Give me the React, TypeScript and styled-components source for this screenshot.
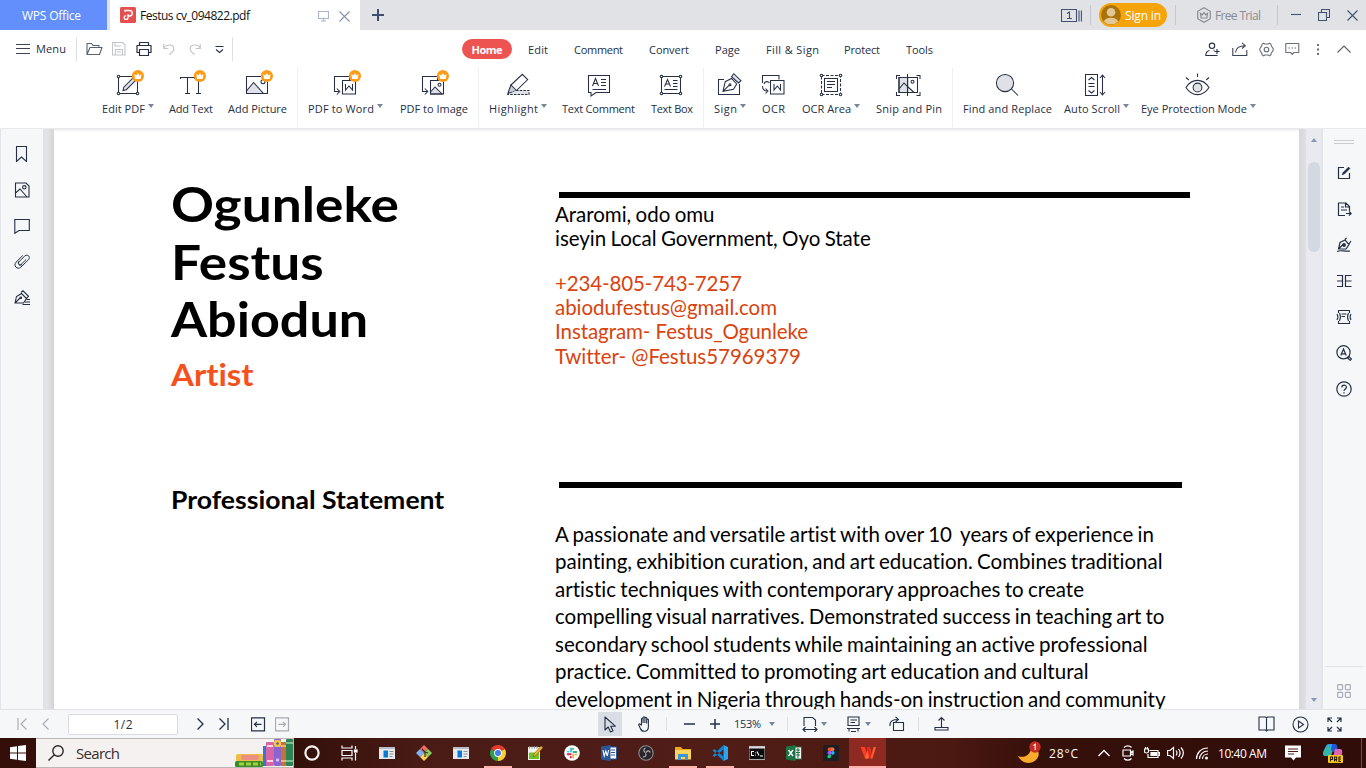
import React, { useLayoutEffect, useRef, useState } from "react";
import styled, { createGlobalStyle, css } from "styled-components";

const ink = "#262f45";
const shade = "#dfe1e6";

const Global = createGlobalStyle`
  * { box-sizing: border-box; }
  body { margin: 0; overflow: hidden; background: #fff; }
  svg { display: block; flex: none; }
`;

/* ---------- shared pieces ---------- */

const FitSpan = styled.span`
  display: inline-block;
  white-space: pre;
  flex: none;
  transform-origin: left center;
  font-variant-ligatures: none;
`;

/** Text set to a fixed measure by spreading the difference between its letters. */
function Fit({ w, children }: { w: number; children: string }) {
  const ref = useRef<HTMLSpanElement>(null);
  const [spacing, setSpacing] = useState(0);
  useLayoutEffect(() => {
    const el = ref.current;
    if (el) setSpacing((w - el.getBoundingClientRect().width) / (children.length - 1));
  }, []);
  return (
    <FitSpan ref={ref} style={{ letterSpacing: spacing, marginRight: -spacing }}>
      {children}
    </FitSpan>
  );
}

/** Text set to a fixed measure by widening the letters themselves. */
function Wide({ w, children }: { w: number; children: string }) {
  const ref = useRef<HTMLSpanElement>(null);
  const [scale, setScale] = useState(1);
  useLayoutEffect(() => {
    const el = ref.current;
    if (el) setScale(w / el.offsetWidth);
  }, []);
  return (
    <FitSpan ref={ref} style={{ transform: `scaleX(${scale})` }}>
      {children}
    </FitSpan>
  );
}

type IconProps = { w?: number; h?: number; c?: string; sw?: number; children: React.ReactNode };
const Icon = ({ w = 16, h = 16, c = ink, sw = 1.1, children }: IconProps) => (
  <svg width={w} height={h} viewBox={`0 0 ${w} ${h}`} fill="none" stroke={c} strokeWidth={sw}>
    {children}
  </svg>
);

const Slot = styled.div<{ $ml?: number; $dy?: number }>`
  flex: none;
  display: flex;
  align-items: center;
  margin-left: ${(p) => p.$ml ?? 0}px;
  margin-top: ${(p) => p.$dy ?? 0}px;
`;

const Divider = styled.div<{ $ml?: number; $h?: number; $c?: string }>`
  flex: none;
  width: 1px;
  height: ${(p) => p.$h ?? 20}px;
  margin-left: ${(p) => p.$ml ?? 0}px;
  background: ${(p) => p.$c ?? "#dcdfe5"};
`;

const Spacer = styled.div`
  flex: 1;
`;

const Caret = styled.i<{ $ml?: number }>`
  flex: none;
  border: 3px solid transparent;
  border-top: 4px solid #7b8598;
  border-bottom: 0;
  margin-left: ${(p) => p.$ml ?? 0}px;
`;

const Screen = styled.div`
  width: 1366px;
  height: 768px;
  display: flex;
  flex-direction: column;
  font-family: "Open Sans", "Noto Sans", sans-serif;
  font-size: 11px;
  color: ${ink};
  overflow: hidden;
`;

/* ---------- title bar ---------- */

const TitleBar = styled.header`
  flex: none;
  height: 30px;
  display: flex;
  align-items: center;
  background: #e1e2e6;
`;
const HomeTab = styled.div`
  width: 107px;
  height: 30px;
  display: flex;
  align-items: center;
  padding-left: 22px;
  background: #638ffc;
  color: #fff;
  font-size: 12px;
`;
const FileTab = styled.div`
  width: 250px;
  height: 30px;
  margin-left: 3px;
  padding-left: 10px;
  display: flex;
  align-items: center;
  background: #fff;
  color: #111;
  font-size: 12px;
`;
const SignIn = styled.div`
  width: 68px;
  height: 24px;
  margin-left: 8px;
  padding-left: 2px;
  display: flex;
  align-items: center;
  gap: 4px;
  border-radius: 12px;
  background: #f5a50b;
  color: #fff;
  font-size: 12px;
`;
const Trial = styled.div`
  margin-left: 3px;
  color: #8a8c92;
  font-size: 12px;
`;

const TitleRow = () => (
  <TitleBar>
    <HomeTab><Fit w={59}>WPS Office</Fit></HomeTab>
    <FileTab>
      <Icon w={16} h={16} c="#fff" sw={1.3}>
        <rect width="16" height="16" rx="1.5" fill="#e5504f" stroke="none" />
        <path d="M5 5V3.500h4.500a2.700 2.700 0 0 1 0 5.500H8v1.500a1.900 1.900 0 1 1-1.900-1.900M8 9V7" />
      </Icon>
      <Slot $ml={4}><Fit w={110}>Festus cv_094822.pdf</Fit></Slot>
      <Slot $ml={68} $dy={2}>
        <Icon w={12} h={12} c="#a9b4cb"><path d="M.5 1.500h10v7h-10zM5.500 8.500v2.500M3 11h5" /></Icon>
      </Slot>
      <Slot $ml={9} $dy={2}>
        <Icon w={11} h={11} c="#8793ad" sw={1.1}><path d="M.5.5l10 10M10.500.5l-10 10" /></Icon>
      </Slot>
    </FileTab>
    <Slot $ml={12}>
      <Icon w={12} h={12} c="#3f4d70" sw={2}><path d="M6 0v12M0 6h12" /></Icon>
    </Slot>
    <Spacer />
    <Icon w={21} h={15} c="#42506f">
      <path d="M.5 1.500h15v12h-15zM18 2.500v11M20.400 2.500v11M6 5.500l2.500-1.500v7M6 10.500h5" />
    </Icon>
    <Divider $ml={8} $c="#c6c8ce" />
    <SignIn>
      <Icon w={20} h={20} c="none">
        <circle cx="10" cy="10" r="10" fill="#a87308" />
        <circle cx="10" cy="7.300" r="4.300" fill="#e2c795" />
        <path d="M2.800 16.500a7.400 5 0 0 1 14.400 0a10 10 0 0 1-14.400 0z" fill="#e2c795" />
      </Icon>
      <Fit w={36}>Sign in</Fit>
    </SignIn>
    <Divider $ml={8} $c="#c6c8ce" />
    <Slot $ml={20}>
      <Icon w={16} h={16} c="#8a8c92" sw={1.2}>
        <path d="M8 .8l6.300 3.500v7.400L8 15.200l-6.300-3.500V4.300z" />
        <path d="M4.500 6.500l1.700 1.300L8 5.500l1.800 2.300 1.700-1.300-.7 4.500H5.200z" />
      </Icon>
      <Trial><Fit w={46}>Free Trial</Fit></Trial>
    </Slot>
    <Divider $ml={16} $c="#c6c8ce" />
    <Slot $ml={13}><Icon w={10} h={12} c="#42506f"><path d="M0 5.500h10" /></Icon></Slot>
    <Slot $ml={17}>
      <Icon w={12} h={12} c="#42506f"><path d="M.5 3.500h8v8h-8zM3.500 3.500v-3h8v8h-3" /></Icon>
    </Slot>
    <Slot $ml={17}>
      <Icon w={11} h={11} c="#42506f"><path d="M.5.5l10 10M10.500.5l-10 10" /></Icon>
    </Slot>
    <Slot $ml={8} />
  </TitleBar>
);

/* ---------- menu row ---------- */

const MenuBar = styled.nav`
  flex: none;
  height: 38px;
  display: flex;
  align-items: center;
`;
const TabStrip = styled.div`
  display: flex;
  align-items: center;
  margin-left: 229px;
`;
const Tab = styled.div<{ $ml: number; $active?: boolean }>`
  height: 20px;
  display: flex;
  align-items: center;
  margin-left: ${(p) => p.$ml}px;
  ${(p) =>
    p.$active &&
    css`
      width: 50px;
      justify-content: center;
      border-radius: 10px;
      background: #ed5451;
      color: #fff;
      font-weight: 700;
    `}
`;
const tabs: [string, number, number][] = [
  ["Edit", 16, 20],
  ["Comment", 26, 49],
  ["Convert", 26, 40],
  ["Page", 26, 25],
  ["Fill & Sign", 26, 53],
  ["Protect", 25, 36],
  ["Tools", 26, 27],
];

const MenuRow = () => (
  <MenuBar>
    <Slot $ml={16}><Icon w={14} h={12} c="#3c4354"><path d="M0 1.500h14M0 5.500h14M0 10.500h14" /></Icon></Slot>
    <Slot $ml={6} $dy={-1}><Fit w={30}>Menu</Fit></Slot>
    <Divider $ml={10} $h={24} />
    <Slot $ml={9}>
      <Icon w={17} h={14} c="#5b6172">
        <path d="M1 12.500V1.500h4.500l1.500 2h6v2M1 12.500l3-7h12l-2.500 7z" strokeLinejoin="round" />
      </Icon>
    </Slot>
    <Slot $ml={9}>
      <Icon w={14} h={14} c="#c3c5c9"><path d="M.5.5h10l2.500 2.500v10H.5zM3 .5v3.500h6M3.500 13V7.500h7V13M5 10h4" /></Icon>
    </Slot>
    <Slot $ml={10}>
      <Icon w={16} h={16} sw={1.2}>
        <path d="M3.500 4.500V1.500h9v3M3.500 11.500h-2.500v-7h14v7h-2.500M3.500 8.500h9v6h-9z" strokeLinejoin="round" />
      </Icon>
    </Slot>
    <Slot $ml={11}>
      <Icon w={12} h={12} c="#c3c5c9" sw={1.2}><path d="M.8 1v4.500h4.500M.8 5.200C3 1 10.500.8 10.800 5.500c.2 3-2 4.200-4.500 6" /></Icon>
    </Slot>
    <Slot $ml={14}>
      <Icon w={12} h={12} c="#c3c5c9" sw={1.2}><path d="M11.200 1v4.500H6.700M11.200 5.200C9 1 1.500.8 1.200 5.500c-.2 3 2 4.200 4.500 6" /></Icon>
    </Slot>
    <Slot $ml={14} $dy={1}>
      <Icon w={9} h={9}><path d="M.5 1.500h8M1 4.500l3.500 3 3.500-3" /></Icon>
    </Slot>
    <Divider $ml={8} $h={24} />
    <TabStrip>
      <Tab $ml={0} $active><Fit w={31}>Home</Fit></Tab>
      {tabs.map(([t, ml, w]) => (
        <Tab key={t} $ml={ml}><Fit w={w}>{t}</Fit></Tab>
      ))}
    </TabStrip>
    <Spacer />
    <Icon w={15} h={15}>
      <circle cx="7" cy="3.800" r="2.700" />
      <path d="M8.500 13.500H.8c0-3 1.200-4.500 3.700-5M8.500 13.500h4M8.500 8c1 .3 1 .5 1 .5M9.500 9.500h5M12 7v5" />
    </Icon>
    <Slot $ml={12}>
      <Icon w={16} h={15} c="#3c4354"><path d="M.8 6v7.500h14V8M3.500 10.500c.5-4.500 4-6.800 9.500-6.800M10 .8l3.300 2.900L10 6.500" /></Icon>
    </Slot>
    <Slot $ml={11}>
      <Icon w={15} h={15} c="#6a6f7d">
        <path d="M4.500 1.200l1.200.8h3.600l1.200-.8 1.500 1 .2 1.700 1.900 2.600v2l-1.900 2.600-.2 1.700-1.500 1-1.200-.8H5.700l-1.200.8-1.500-1-.2-1.700L.9 8.500v-2l1.900-2.600L3 2.200z" />
        <circle cx="7.500" cy="7.500" r="2.300" />
      </Icon>
    </Slot>
    <Slot $ml={11}>
      <Icon w={15} h={14} c="#6a6f7d">
        <path d="M.8 1.500h13v9H9l-1.700 1.800L5.600 10.500H.8z" strokeLinejoin="round" />
        <path d="M3.500 6h1.500M6.500 6H8M9.500 6H11" />
      </Icon>
    </Slot>
    <Slot $ml={17}>
      <Icon w={3} h={13} c="none"><g fill="#6a6f7d"><rect width="2" height="2" y="1" /><rect width="2" height="2" y="5.500" /><rect width="2" height="2" y="10" /></g></Icon>
    </Slot>
    <Slot $ml={17}><Icon w={14} h={8} c="#5b6070"><path d="M.5 7.500L7 1l6.500 6.500" /></Icon></Slot>
    <Slot $ml={15} />
  </MenuBar>
);

/* ---------- ribbon ---------- */

const Ribbon = styled.section`
  flex: none;
  height: 61px;
  padding-left: 102px;
  display: flex;
  border-bottom: 1px solid #e8e9ec;
`;
const Tool = styled.div<{ $w: number; $ml: number }>`
  flex: none;
  width: ${(p) => p.$w}px;
  margin-left: ${(p) => p.$ml}px;
  padding-top: 1px;
`;
const ToolIcon = styled.div<{ $w: number; $nudge: number }>`
  width: 31px;
  margin-left: ${(p) => Math.floor((p.$w - 30) / 2) + p.$nudge}px;
`;
const ToolLabel = styled.div`
  display: flex;
  height: 16px;
  margin-top: 3px;
  align-items: center;
`;
const GroupLine = styled.div`
  flex: none;
  width: 1px;
  height: 59px;
  margin-left: 10px;
  background: #eeeff2;
`;

const Crown = () => (
  <g stroke="none">
    <circle cx="23.900" cy="7" r="6.100" fill="#ff9a15" />
    <path d="M20.300 5l2 1.500 1.600-2.400 1.600 2.400 2-1.500-.8 5h-5.600z" fill="#fff" />
  </g>
);
const nodes = (pts: number[][]) => pts.map(([x, y]) => <circle key={`${x}-${y}`} cx={x} cy={y} r="1.300" fill="#fff" />);
const corners = [[4.5, 7.5], [23.5, 7.5], [4.5, 24.5], [23.5, 24.5]];

const glyph: Record<string, React.ReactNode> = {
  edit: <><path d="M4.500 7.500h19v17h-19z" />{nodes(corners)}<path d="M9 21.500l.8-3.300L19 9l2.500 2.500-9.200 9.200z" fill={shade} /><Crown /></>,
  text: <><path d="M4.500 10V8.500h14V10M11.500 8.500v16M9 24.500h5M22.500 11v13.500M20 24.500h5" /><Crown /></>,
  picture: <><path d="M3.500 22l7-8.500 10 11h-17z" fill={shade} /><path d="M3.500 7.500h21v17h-21z" /><circle cx="20" cy="12.800" r="2" /><Crown /></>,
  word: <><path d="M18.500 11.500v-4h-15v15H8M5.800 19.500l3 3-3 3M11.500 11.500h13v13.500h-13zM14.500 15v6l3.500-4 3.500 4v-6" /><Crown /></>,
  image: <><path d="M18.500 11.500v-4h-15v15H8M5.800 19.500l3 3-3 3" /><path d="M11.500 23l4.500-5 7 7H11.500z" fill={shade} /><path d="M11.500 11.500h13v13.500h-13z" /><circle cx="20.500" cy="15.800" r="1.500" /><Crown /></>,
  highlight: <><path d="M7 16L18.300 5.300l5.400 5.200L12.500 21.500 8 22z" /><path d="M7 16l5.500 5.500L9 23l-4 1-1.200 1L5 21z" fill="#c9ccd4" /><path d="M12 21.500h13v4H4" strokeDasharray="2.500 1.200" fill={shade} /></>,
  comment: <><path d="M3.500 6.500h21v17H11l-5 3.500v-3.500H3.500z" /><path d="M7.500 17l3-7.500 3 7.500M8.500 14.500h4M16 10.500h5M16 13.500h5M16 16.500h5M7.500 20.500H21" /></>,
  box: <><path d="M4.500 7.500h19v17h-19z" />{nodes(corners)}<path d="M7.500 17.500l3-7 3 7M8.500 15h4M16 11.500h4.500M16 14.500h4.500M16 17.500h4.500M7.500 20.500h13" /></>,
  sign: <><path d="M9 10.500H3.500v15h21V15" /><path d="M8 22.300l2.200-9.600L16.500 9.500l5.200 5.500-3.200 5.300zM8 22.300l6-6" /><circle cx="15" cy="15.700" r="1" /><path d="M16.500 7.700l2.300-3 7.200 7-2.500 2.300z" fill={shade} /></>,
  ocr: <><path d="M20 10.500v-4H3.500V14M11.500 11.500h13.500v13.500H11.500zM15 15v6l3.300-4 3.200 4v-6" /><path d="M5 15c1-3 4-3 5.500-1M3.500 17c0 3 1.500 5 4.500 5M6.500 19.500l2.500 2.500-2.500 2.500" /></>,
  area: <><path d="M4.500 6.500h19v19h-19z" strokeDasharray="3 1.500" /><path d="M7.500 9.500h13v13h-13z" fill="#fff" /><path d="M10 12.500h8M10 15.500h8M10 18.500h5" />{nodes([[4.5, 6.5], [23.5, 6.5], [4.5, 25.5], [23.5, 25.5]])}</>,
  snip: <><path d="M5 8.500h8.700v15H5z" fill={shade} /><path d="M5 8.500h18.500v15H5zM5 20l5-6 3.500 3.500 6.500 6M13.500 5v22M2.500 10V6.500H6M22.500 6.500H26V10M2.500 23v3.500H6M22.500 26.500H26V23" /><circle cx="18.500" cy="12.700" r="1.500" /></>,
  find: <><circle cx="12" cy="14" r="8.600" fill={shade} /><path d="M18.500 20l6.500 6.500" /></>,
  scroll: <><path d="M4.500 5.500h12v21h-12zM7.500 11l3-2.500 3 2.500M7.500 14.500h6M7.500 17.500h6M7.500 21.500l3 2.500 3-2.500M21.500 6v20M19 9l2.500-3L24 9M19 23l2.500 3 2.500-3" /></>,
  eye: <><path d="M3 18.500C9 9 20 9 26 18.500 20 28 9 28 3 18.500z" /><circle cx="14.500" cy="18.500" r="4.400" fill={shade} /><path d="M14.500 4.500v3.500M3 8.500L5.800 11M26 8.500L23.200 11" /></>,
};

type ToolDef = { id: string; label: string; ml: number; w: number; lw?: number; line?: boolean; nudge?: number };
const tools: ToolDef[] = [
  { id: "edit", label: "Edit PDF", ml: 0, w: 52, lw: 43 },
  { id: "text", label: "Add Text", ml: 15, w: 44, nudge: -1 },
  { id: "picture", label: "Add Picture", ml: 15, w: 59, line: true },
  { id: "word", label: "PDF to Word", ml: 10, w: 75, lw: 66 },
  { id: "image", label: "PDF to Image", ml: 17, w: 68, line: true, nudge: -1 },
  { id: "highlight", label: "Highlight", ml: 10, w: 57, lw: 49, nudge: 1 },
  { id: "comment", label: "Text Comment", ml: 16, w: 73, nudge: 1 },
  { id: "box", label: "Text Box", ml: 16, w: 42, line: true, nudge: -1 },
  { id: "sign", label: "Sign", ml: 10, w: 31, lw: 23 },
  { id: "ocr", label: "OCR", ml: 17, w: 23 },
  { id: "area", label: "OCR Area", ml: 17, w: 57, lw: 49, nudge: 1 },
  { id: "snip", label: "Snip and Pin", ml: 17, w: 66, lw: undefined, line: true, nudge: -1 },
  { id: "find", label: "Find and Replace", ml: 10, w: 89 },
  { id: "scroll", label: "Auto Scroll", ml: 12, w: 64, lw: 56, nudge: -1 },
  { id: "eye", label: "Eye Protection Mode", ml: 13, w: 114, lw: 106, nudge: -1 },
];

const RibbonRow = () => (
  <Ribbon>
    {tools.map((t) => (
      <React.Fragment key={t.id}>
        <Tool $w={t.w} $ml={t.ml}>
          <ToolIcon $w={t.w} $nudge={t.nudge ?? 0}>
            <Icon w={31} h={28} sw={1.05}><g transform="translate(1 0)">{glyph[t.id]}</g></Icon>
          </ToolIcon>
          <ToolLabel>
            <Fit w={t.lw ?? t.w}>{t.label}</Fit>
            {t.lw && <Slot $dy={-5}><Caret $ml={3} /></Slot>}
          </ToolLabel>
        </Tool>
        {t.line && <GroupLine />}
      </React.Fragment>
    ))}
  </Ribbon>
);

/* ---------- workspace ---------- */

const Work = styled.main`
  flex: none;
  height: 580px;
  display: flex;
  overflow: hidden;
`;
const LeftRail = styled.aside`
  width: 43px;
  flex: none;
  padding: 13px 0 0 13px;
  border-left: 1px solid #e2e4ea;
  background: #f5f7f9;
  display: flex;
  flex-direction: column;
  gap: 12px;
`;
const RailCell = styled.div<{ $h?: number }>`
  height: ${(p) => p.$h ?? 24}px;
  display: flex;
  align-items: center;
`;
const LeftGutter = styled.div`
  width: 11px;
  flex: none;
  background: linear-gradient(90deg, #e0e2e8 0 3px, #e5e6ea 3px, #d3d4d7 11px);
`;
const RightGutter = styled.div`
  width: 7px;
  flex: none;
  background: linear-gradient(90deg, #d7d7d9, #dfe0e3);
`;
const ScrollTrack = styled.div`
  width: 15px;
  flex: none;
  display: flex;
  flex-direction: column;
  align-items: center;
  padding: 9px 0 7px;
  background: #e8eaef;
`;
const Thumb = styled.div`
  width: 12px;
  height: 90px;
  margin-top: 20px;
  border-radius: 6px;
  background: #d4d8e1;
`;
const Arrow = styled.i<{ $down?: boolean }>`
  border: 3px solid transparent;
  border-${(p) => (p.$down ? "top" : "bottom")}: 4px solid #8797b4;
  border-${(p) => (p.$down ? "bottom" : "top")}: 0;
`;
const RightRail = styled.aside`
  width: 45px;
  flex: none;
  border-left: 2px solid #e0e3e8;
  background: #f5f7f9;
  display: flex;
  flex-direction: column;
  align-items: center;
  padding: 11px 1px 0 0;
`;
const Grip = styled.div`
  width: 20px;
  height: 4px;
  border: solid #c9ccd1;
  border-width: 1px 0;
  margin-bottom: 17px;
`;
const RailTools = styled.div`
  display: flex;
  flex-direction: column;
  gap: 12px;
`;
const RailRule = styled.div`
  width: 38px;
  height: 1px;
  background: #dfe2e7;
  margin-bottom: 17px;
`;

const Page = styled.article`
  width: 1245px;
  flex: none;
  background: #fff;
  color: #000;
  font-family: Lato, "Open Sans", sans-serif;
  display: flex;
  box-shadow: inset 0 3px 3px -2px #e3e3e5;
`;
const NameColumn = styled.div`
  width: 501px;
  padding: 46px 0 0 117px;
  font-weight: 700;
`;
const Name = styled.h1`
  margin: 0;
  font-size: 48px;
  line-height: 57.5px;
  font-weight: 700;
  display: flex;
  flex-direction: column;
  align-items: flex-start;
`;
const Role = styled.div`
  margin-top: 6px;
  font-size: 31px;
  line-height: 40px;
  color: #f4511e;
`;
const SectionTitle = styled.h2`
  margin: 91px 0 0;
  font-size: 24px;
  line-height: 30px;
  font-weight: 700;
`;
const Details = styled.div`
  padding-top: 63px;
  font-size: 20.5px;
`;
const Bar = styled.div<{ $w: number }>`
  width: ${(p) => p.$w}px;
  height: 6px;
  margin-left: 4px;
  background: #000;
`;
const Lines = styled.div<{ $lh: number; $mt: number; $c?: string; $ws?: number }>`
  display: flex;
  flex-direction: column;
  align-items: flex-start;
  margin-top: ${(p) => p.$mt}px;
  line-height: ${(p) => p.$lh}px;
  word-spacing: ${(p) => p.$ws ?? 0}px;
  color: ${(p) => p.$c ?? "#000"};
`;

const body: [string, number][] = [
  ["A passionate and versatile artist with over 10  years of experience in", 599],
  ["painting, exhibition curation, and art education. Combines traditional", 607.5],
  ["artistic techniques with contemporary approaches to create", 529],
  ["compelling visual narratives. Demonstrated success in teaching art to", 609.5],
  ["secondary school students while maintaining an active professional", 592.5],
  ["practice. Committed to promoting art education and cultural", 533.5],
  ["development in Nigeria through hands-on instruction and community", 610.5],
];

const pen = "M1 13l1.500-6.500 5-3 5 5-3 4.500zM1 13l5-5M7 2.500L9 .8l5.500 5.500-2 2";

const Workspace = () => (
  <Work>
    <LeftRail>
      <RailCell><Icon><path d="M2.500 .5h10v15l-5-4.500-5 4.500z" /></Icon></RailCell>
      <RailCell><Icon><path d="M1.500 1h10.500l3 3v11H1.500zM1.500 11l4.500-4 7 8" /><circle cx="10.300" cy="5.300" r="1.700" /></Icon></RailCell>
      <RailCell><Icon><path d="M.8 1.500h14.500v11H5l-4.200 2.800z" /></Icon></RailCell>
      <RailCell>
        <Icon w={17} sw={1}>
          <path d="M8.500 1.800L2 8.200c-3 3.500 1.300 8 4.800 5l7.700-7.500c2.500-2.800-1-6-3.700-3.700L5.200 7.500c-1.800 2 .5 4.200 2.300 2.500l4.500-4.400" strokeLinecap="round" />
          <path d="M5 7.200C3 9.500 5.500 12.800 8.200 10.500" />
        </Icon>
      </RailCell>
      <RailCell><Icon w={17}><path d={pen} /><circle cx="6.800" cy="7.800" r=".8" /><path d="M12.500 9.500H16M11 12h5M8.500 14.500H16" /></Icon></RailCell>
    </LeftRail>
    <LeftGutter />
    <Page>
      <NameColumn>
        <Name>
          <Wide w={227.5}>Ogunleke</Wide>
          <Wide w={153}>Festus</Wide>
          <Wide w={197.5}>Abiodun</Wide>
        </Name>
        <Role><Wide w={83}>Artist</Wide></Role>
        <SectionTitle><Wide w={273.5}>Professional Statement</Wide></SectionTitle>
      </NameColumn>
      <Details>
        <Bar $w={631} />
        <Lines $lh={24.4} $mt={3.5} $ws={-0.8}>
          <Fit w={159.5}>Araromi, odo omu</Fit>
          <Fit w={315.7}>iseyin Local Government, Oyo State</Fit>
        </Lines>
        <Lines $lh={24.3} $mt={20.35} $c="#d8430e">
          <Fit w={187}>+234-805-743-7257</Fit>
          <Fit w={222}>abiodufestus@gmail.com</Fit>
          <Fit w={253}>Instagram- Festus_Ogunleke</Fit>
          <Fit w={246}>Twitter- @Festus57969379</Fit>
        </Lines>
        <Slot $dy={114.15}><Bar $w={623} /></Slot>
        <Lines $lh={27.5} $mt={32.9} $ws={-1}>
          {body.map(([t, w]) => <Fit key={t} w={w}>{t}</Fit>)}
        </Lines>
      </Details>
    </Page>
    <RightGutter />
    <ScrollTrack><Arrow /><Thumb /><Spacer /><Arrow $down /></ScrollTrack>
    <RightRail>
      <Grip />
      <RailTools>
        <RailCell><Icon sw={1.200}><path d="M8 2.500H2.500v11h11V8" /><path d="M6 10l1-2.500 5.500-5.500 1.500 1.500L8.500 9z" fill={ink} strokeWidth=".4" /></Icon></RailCell>
        <RailCell><Icon sw={1.200}><path d="M9 14.500H2.500v-12.500h7.500l3.500 3.500V10M9.500 2v4h4M5 6h3M5 9h6M10 12.500h5M13 10.500l2.200 2-2.200 2" /></Icon></RailCell>
        <RailCell><Icon sw={1.200}><path d="M2.500 12L4 5.500 9 3l4 4.500-3 4.500zM2.500 12l4.500-4.500M9 2.500L10.500 1M13 7l2-3M1 14.500c4-2 8 .5 13-.5" /><circle cx="8" cy="8" r="1.300" fill={ink} /></Icon></RailCell>
        <RailCell><Icon sw={1.200}><path d="M1 2.500h5.500v11H1M15.500 2.500H9.500v11h6M1 8h5.500M9.500 8h6" /></Icon></RailCell>
        <RailCell><Icon sw={1.100}><path d="M2.500 4V1.500h11V4M2.500 12v2.500h11V12M1 5c1.200 2 1.200 4 0 6M3.500 4c1.200 2.500 1.200 5.500 0 8M15 5c-1.200 2-1.200 4 0 6M12.500 4c-1.200 2.500-1.200 5.500 0 8M5.500 5h5M5.500 7.500h3.500" /></Icon></RailCell>
        <RailCell><Icon sw={1.200}><circle cx="7.500" cy="7.300" r="6.600" /><path d="M4.800 10.500l2.700-6.500 2.700 6.500M5.500 8.800h4M11.500 13l1.500-1.500 2.500 2.500-1.300 1.300z" /></Icon></RailCell>
        <RailCell><Icon sw={1.200}><circle cx="8" cy="8" r="7.200" /><path d="M5.800 6.500c0-3.200 4.600-3 4.600-.3 0 1.800-2.400 1.800-2.400 3.800M8 11.300v1.300" /></Icon></RailCell>
      </RailTools>
      <Spacer />
      <RailRule />
      <Icon w={14} h={14} c="#a9adb5" sw={1.200}>
        <rect x=".6" y=".6" width="5" height="5" rx=".8" /><rect x="8.400" y=".6" width="5" height="5" rx=".8" />
        <rect x=".6" y="8.400" width="5" height="5" rx=".8" /><rect x="8.400" y="8.400" width="5" height="5" rx=".8" />
      </Icon>
      <Slot $dy={11} />
    </RightRail>
  </Work>
);

/* ---------- status bar ---------- */

const StatusBar = styled.footer`
  flex: none;
  height: 29px;
  display: flex;
  align-items: center;
  border-top: 1px solid #e0e3e8;
  background: #f5f7f9;
`;
const PageBox = styled.div`
  width: 110px;
  height: 21px;
  margin-left: 19px;
  display: flex;
  align-items: center;
  justify-content: center;
  border: 1px solid #d9dce2;
  border-radius: 2px;
  background: #fff;
  font-size: 12px;
`;
const Selected = styled.div`
  width: 24px;
  height: 24px;
  margin-left: 308px;
  display: flex;
  align-items: center;
  justify-content: center;
  background: #d9dde5;
`;

const Status = () => (
  <StatusBar>
    <Slot $ml={17}><Icon w={10} h={12} c="#a8abb1"><path d="M1 0v12M9.500.5L4 6l5.500 5.500" /></Icon></Slot>
    <Slot $ml={15}><Icon w={7} h={12} c="#a8abb1"><path d="M6.500.5L1 6l5.500 5.500" /></Icon></Slot>
    <PageBox><Fit w={19}>1/2</Fit></PageBox>
    <Slot $ml={19}><Icon w={7} h={12} sw={1.300}><path d="M.5.5L6 6 .5 11.500" /></Icon></Slot>
    <Slot $ml={15}><Icon w={10} h={12} sw={1.300}><path d="M.5.5L6 6 .5 11.500M9 0v12" /></Icon></Slot>
    <Slot $ml={22}><Icon w={15} h={15} sw={1.200}><path d="M.5.8h13v13H.5zM10.500 7.300h-7M6 4.800L3.500 7.300 6 9.800" /></Icon></Slot>
    <Slot $ml={9}><Icon w={15} h={15} sw={1.200} c="#a8abb1"><path d="M.5.8h13v13H.5zM3.500 7.300h7M8 4.800l2.500 2.500L8 9.800" /></Icon></Slot>
    <Selected>
      <Icon w={14} h={17}><path d="M2 1v13l3.200-3 2.300 5 2.500-1.200-2.300-4.600h4.600z" strokeLinejoin="round" /></Icon>
    </Selected>
    <Slot $ml={16}>
      <Icon w={13} h={16}>
        <path d="M3.500 9V3.200c0-1.200 1.600-1.200 1.600 0V7 1.800c0-1.400 1.800-1.400 1.800 0V7 2.300c0-1.300 1.800-1.300 1.800 0V7.500 4c0-1.200 1.700-1.200 1.700 0v6.500c0 6-6.500 6-8 2L.9 9.300c-.7-1.300.9-1.900 1.500-.8z" />
      </Icon>
    </Slot>
    <Divider $ml={15} $h={14} />
    <Slot $ml={17}><Icon w={11} h={12} sw={1.500}><path d="M0 6h11" /></Icon></Slot>
    <Slot $ml={15}><Icon w={10} h={12} sw={1.500}><path d="M0 6h10M5 1v10" /></Icon></Slot>
    <Slot $ml={14} $dy={-1}><Fit w={27}>153%</Fit></Slot>
    <Caret $ml={8} />
    <Divider $ml={12} $h={14} />
    <Slot $ml={14}>
      <Icon w={16} h={16}><path d="M2 10V1.500h8.500L13.500 4v6M1 13.500h14M3.500 11L1 13.500 3.500 16M12.500 11l2.500 2.500L12.500 16" /></Icon>
    </Slot>
    <Caret $ml={3} />
    <Slot $ml={20}><Icon w={13} h={16}><path d="M1 1h11v8.500H1zM3.500 4H10M3.500 6.500H8M0 12.500h13M2 12.500v3M11 12.500v3M4 15.500h5" /></Icon></Slot>
    <Caret $ml={5} />
    <Slot $ml={18}><Icon w={16} h={16}><path d="M4.500 6.500h10v8h-10zM1 10C.5 5 4 3.500 9 3.500M6.500.8l3 2.700-3 2.700" /></Icon></Slot>
    <Divider $ml={13} $h={14} />
    <Slot $ml={15}><Icon w={15} h={16}><path d="M7.500 11V1.500M4.500 4.500l3-3 3 3M1 11.500h13v2.500H1z" /></Icon></Slot>
    <Spacer />
    <Icon w={17} h={16}><path d="M1 1h6.500l1 1 1-1H16v13H9.500l-1 1-1-1H1zM8.500 2v12" /></Icon>
    <Slot $ml={17}><Icon w={17} h={17}><circle cx="8.500" cy="8.500" r="7.500" /><path d="M6.500 5v7l5-3.500z" /></Icon></Slot>
    <Slot $ml={18}>
      <Icon w={15} h={15} sw={1.200}>
        <path d="M1 5V1h4M1 1l4 4M10 1h4v4M14 1l-4 4M1 10v4h4M1 14l4-4M14 10v4h-4M14 14l-4-4" />
      </Icon>
    </Slot>
    <Slot $ml={24} />
  </StatusBar>
);

/* ---------- taskbar ---------- */

const TaskBar = styled.footer`
  flex: none;
  height: 30px;
  display: flex;
  align-items: center;
  background: linear-gradient(90deg, #340f0a 0, #34100b 300px, #4a1b15 420px, #501d17 700px, #4c1812 950px, #36100b 1040px, #300d09 1366px);
  color: #fff;
  font-size: 12px;
`;
const Start = styled.div`
  width: 36px;
  display: flex;
  justify-content: center;
`;
const SearchBox = styled.div`
  width: 258px;
  height: 30px;
  padding-left: 12px;
  display: flex;
  align-items: center;
  border: 1px solid #bdb6b5;
  border-left: 0;
  background: #f5f1f0;
  color: #33302f;
  font-size: 15px;
`;
const AppButton = styled.div<{ $run?: boolean; $on?: boolean; $lead?: boolean }>`
  width: 37px;
  height: 30px;
  padding-right: ${(p) => (p.$lead ? 1 : 0)}px;
  display: flex;
  align-items: center;
  justify-content: center;
  background: ${(p) => (p.$on ? "#8e2a22" : "none")};
  background-image: ${(p) => (p.$run ? "linear-gradient(#ffb3ac, #ffb3ac)" : "none")};
  background-size: ${(p) => (p.$on ? "37px" : "28px")} 2px;
  background-position: center bottom;
  background-repeat: no-repeat;
`;

const windowIcon = (
  <Icon w={16} h={14} c="none"><rect y="1" width="16" height="12" fill="#e9eaec" /><rect y="1" width="16" height="2" fill="#b9bcc2" /><rect x="4.500" y="4.500" width="4.500" height="7" fill="#0a78d6" /><path d="M10.500 5.500h4M10.500 8h4M10.500 10.500h3" stroke="#8d9095" /></Icon>
);

const apps: { id: string; run?: boolean; on?: boolean; lead?: boolean; art: React.ReactNode }[] = [
  { id: "cortana", lead: true, art: <Icon c="#f6f2f2" sw={2.2}><circle cx="8" cy="8" r="6.600" /></Icon> },
  { id: "taskview", lead: true, art: <Icon w={17} c="#fff" sw={1.200}><path d="M1 .5v2.500h10V.5M1 5.500h10v5H1zM1 15.500V13h10v2.500M14.500 1v3M14.500 8v7.500" /><rect x="13.500" y="5" width="2.500" height="2" fill="#fff" /></Icon> },
  { id: "win1", art: windowIcon },
  { id: "git", art: <Icon c="none"><path d="M8 0l4 4-4 4-4-4z" fill="#ef6e64" /><path d="M4 4l4 4-4 4-4-4z" fill="#7fb0f5" /><path d="M12 4l4 4-4 4-4-4z" fill="#8bd160" /><path d="M8 8l4 4-4 4-4-4z" fill="#f8d45f" /><path d="M6 4l3 3v5M9 7l3 1" stroke="#4a2b20" strokeWidth="1.200" /></Icon> },
  { id: "win2", art: windowIcon },
  { id: "chrome", run: true, art: <Icon c="none"><path d="M8 8L1.100 4A8 8 0 0 1 14.900 4z" fill="#e33b2e" /><path d="M8 8L14.900 4A8 8 0 0 1 8 16z" fill="#fdd131" /><path d="M8 8v8A8 8 0 0 1 1.100 4z" fill="#2aa14c" /><circle cx="8" cy="8" r="3.900" fill="#fff" /><circle cx="8" cy="8" r="3" fill="#3f7ee8" /></Icon> },
  { id: "notes", art: <Icon c="none"><path d="M1 2h12v13H1z" fill="#f2f3ec" /><path d="M2 7.500h10v6.500H2z" fill="#6fc32b" /><path d="M2.500 1v2.500M5 1v2.500M7.500 1v2.500M10 1v2.500" stroke="#8c8f94" /><path d="M6 12l1-3 7-8 2 1.500-7 8z" fill="#f2b52b" stroke="#6b5118" strokeWidth=".5" /></Icon> },
  { id: "slack", art: <Icon c="none"><circle cx="8" cy="8" r="7.800" fill="#fff" /><g strokeWidth="1.900" strokeLinecap="round"><path d="M7 3.500v3M4 6.600h.5" stroke="#36c5f0" /><path d="M12.300 7H9.500M9 3.700v.4" stroke="#2eb67d" /><path d="M9.200 12.500V9.500M11.700 9.500h.4" stroke="#ecb22e" /><path d="M3.700 9.200h3M6.800 12v.4" stroke="#e01e5a" /></g></Icon> },
  { id: "word", art: <Icon c="none"><path d="M8 2h7.500v12H8z" fill="#fff" stroke="#2a5699" /><path d="M10 5h4M10 7.500h4M10 10h4" stroke="#2a5699" /><path d="M0 1.500L9.500 0v16L0 14.500z" fill="#2a5699" /><path d="M2 5l1.200 6L4.800 6l1.500 5L7.600 5" stroke="#fff" strokeWidth="1.100" /></Icon> },
  { id: "obs", art: <Icon c="none"><circle cx="8" cy="8" r="7.200" fill="#28262b" stroke="#8d8b8f" /><path d="M7.500 3c-2.200 1-2.200 3.500 0 4.500M12.200 7.500c-1-2.500-3.500-2-4 .2M5 11.800c2.500.5 3.800-1.500 2.500-3.500" stroke="#b5b3b8" strokeWidth="1.200" /></Icon> },
  { id: "files", run: true, art: <Icon c="none"><path d="M0 2h6l1.500 2H16v10H0z" fill="#e9a820" /><path d="M0 5h16v9.500H0z" fill="#fdd45c" /><path d="M3 15V9h10v6h-3v-3H6v3z" fill="#3d95e0" /></Icon> },
  { id: "code", run: true, art: <Icon c="none"><path d="M11.500 0L16 2v12l-4.500 2z" fill="#2ba3ee" /><path d="M11.500 0v4.500L2.500 12 .5 10.500zM11.500 16v-4.500L2.500 4 .5 5.500z" fill="#1482cc" /></Icon> },
  { id: "cmd", art: <Icon c="none"><rect y="1.500" width="16" height="13" fill="#0c0c0c" stroke="#aaa" /><path d="M0 2.500h16" stroke="#ddd" strokeWidth="2" /><path d="M5 6.500H2.500v4H5M6.500 7.500v.8M6.500 9.700v.8M8 6.500l2 4M11 11h3" stroke="#fff" /></Icon> },
  { id: "excel", art: <Icon c="none"><path d="M8 2h7.500v12H8z" fill="#fff" stroke="#1f7244" /><path d="M10 5h4M10 7.500h4M10 10h4M12 3v10" stroke="#1f7244" /><path d="M0 1.500L9.500 0v16L0 14.500z" fill="#1f7244" /><path d="M2.500 5l4.500 6M7 5l-4.500 6" stroke="#fff" strokeWidth="1.400" /></Icon> },
  { id: "figma", art: <Icon c="none"><rect width="16" height="16" rx="1" fill="#1e1e1e" /><path d="M8 2.500H6.300a1.800 1.800 0 0 0 0 3.600H8z" fill="#f24e1e" /><path d="M8 2.500h1.700a1.800 1.800 0 0 1 0 3.600H8z" fill="#ff7262" /><path d="M8 6.100H6.300a1.800 1.800 0 0 0 0 3.600H8z" fill="#a259ff" /><circle cx="9.800" cy="7.900" r="1.800" fill="#1abcfe" /><path d="M8 9.700H6.300A1.800 1.800 0 1 0 8 11.500z" fill="#0acf83" /></Icon> },
  { id: "wps", run: true, on: true, art: <Icon c="none"><path d="M.5 2H5l3.500 11.500H5z" fill="#ff3b22" /><path d="M5 13.500L8 4h3L8.500 13.500z" fill="#ff6a3c" /><path d="M7 2h3l2 7.500-1.500 4H9z" fill="#e82a1c" /><path d="M10.500 13.500L13.500 2H16l-3.500 11.500z" fill="#ff5a30" /></Icon> },
];

const BooksArt = () => (
  <Icon w={58} h={28} c="none">
    <rect x="1" y="15" width="27" height="7" rx="1.500" fill="#efbd45" /><rect x="6" y="16" width="18" height="5" rx="2" fill="#ee8f83" />
    <rect x="0" y="22" width="28" height="6" rx="1.500" fill="#3c8b2a" /><path d="M4 25h22" stroke="#a4cf3f" strokeWidth="3" strokeDasharray="5 2" />
    <rect x="28" y="7" width="4" height="20" fill="#3577d0" />
    <rect x="31" y="3" width="8" height="24" rx="1" fill="#d866a5" /><path d="M32 7h6M32 22h6" stroke="#ffd0e6" strokeWidth="2" />
    <rect x="39" y="0" width="7" height="27" rx="1" fill="#8b64cf" /><rect x="39" y="1" width="7" height="7" rx="2" fill="#f0c74a" /><circle cx="42.500" cy="4.500" r="1.200" fill="#6c4697" /><circle cx="42.500" cy="21" r="1.800" fill="#d9b8f5" />
    <rect x="46" y="3" width="5" height="24" fill="#c3723a" /><path d="M46 7h5M46 22h5" stroke="#f2b36f" strokeWidth="2" />
    <rect x="51" y="0" width="7" height="27" rx="1" fill="#2c8354" /><path d="M51 4h7M51 22h7" stroke="#78c391" strokeWidth="2" />
  </Icon>
);

const Taskbar = () => (
  <TaskBar>
    <Start>
      <Icon w={16} h={16} c="none"><path d="M0 2.200L7 1.200v6.300H0zM8 1.100L16 0v7.500H8zM0 8.500h7v6.300L0 13.800zM8 8.500h8V16l-8-1.100z" fill="#fff" /></Icon>
    </Start>
    <SearchBox>
      <Icon w={16} h={16} c="#2a2726" sw={1.400}><circle cx="10" cy="6" r="5.200" /><path d="M6.300 9.700L.5 15.500" /></Icon>
      <Slot $ml={12}><Fit w={44}>Search</Fit></Slot>
      <Spacer />
      <BooksArt />
    </SearchBox>
    {apps.map((a) => <AppButton key={a.id} $run={a.run} $on={a.on} $lead={a.lead}>{a.art}</AppButton>)}
    <Spacer />
    <Icon w={26} h={26} c="none">
      <path d="M15 4c6 5 8 9 6 13-3 7-15 9-20-1 7 3 14-2 14-12z" fill="#fbab2c" />
      <circle cx="18" cy="7" r="5.700" fill="#c92c23" /><path d="M16.500 5.500l1.700-1.200V10" stroke="#fff" strokeWidth="1.100" />
    </Icon>
    <Slot $ml={6}><Fit w={29}>28°C</Fit></Slot>
    <Slot $ml={20}><Icon w={12} h={8} c="#fff" sw={1.300}><path d="M.5 7L6 1.500 11.500 7" /></Icon></Slot>
    <Slot $ml={12}><Icon w={12} h={16} c="#fff" sw={1.200}><path d="M2 2.500C4 .3 7.500.3 9.500 2.500M2 13.500c2 2.200 5.500 2.200 7.500 0M1 5h7.500v6H1zM8.500 7.500l2.500-1.500v4L8.500 8.500" /></Icon></Slot>
    <Slot $ml={10}><Icon w={16} h={14} c="#fff" sw={1.200}><path d="M5.500 4.500H14v7H4V8M14 6.500h1.500v3H14M.5 3h4v2.500c0 2-4 2-4 0zM1.500 3V1M3.500 3V1" /><path d="M7 6.500h5.500v3H7z" fill="#fff" /></Icon></Slot>
    <Slot $ml={7}><Icon w={18} h={14} c="#fff" sw={1.200}><path d="M.6 4.500H3L6.500 1.500v11L3 9.500H.6zM9 4.500c1.200 1.500 1.200 3.500 0 5M11.500 3c2 2.500 2 5.500 0 8M14 1.500c3 3.500 3 7.500 0 11" /></Icon></Slot>
    <Slot $ml={10}><Icon w={14} h={14} c="#fff" sw={1.200}><path d="M1.500 13C1.500 7 6 2 13 2M4.500 13c0-4.500 3.500-8 8.500-8M7.500 13c0-3 2.500-5 5.500-5" /><circle cx="11.500" cy="12" r="1.500" fill="#fff" stroke="none" /></Icon></Slot>
    <Slot $ml={9}><Fit w={49}>10:40 AM</Fit></Slot>
    <Slot $ml={18}><Icon w={16} h={16} c="none"><path d="M0 .5h16v12h-5L8.500 15.500 6 12.500H0z" fill="#fff" /><path d="M3 4h10M3 6.500h10M3 9h6" stroke="#4b1b15" /></Icon></Slot>
    <Slot $ml={22}>
      <Icon w={20} h={22} c="none">
        <path d="M6 2h6l-4 12H2C-.5 14-.3 11 .5 9L3 4c.5-1.300 1.500-2 3-2z" fill="#2fa3e8" /><path d="M1 9l1.800-4h7L8 14H2.500C0 14 .2 11 1 9z" fill="#35bd8b" opacity=".7" />
        <path d="M9 2h3c2 0 2 2 2.500 4L13 9l-3 1-2-2z" fill="#2257d6" /><path d="M12 7h5c2.500 0 2.500 3 2 5l-2 4H8c2 0 2.500-3 4-9z" fill="#e063b0" />
        <rect x="5" y="13" width="15" height="8" rx="1" fill="#fdc914" /><path d="M7.500 19.500v-4.500h2v2.500h-2M11.500 19.500v-4.500h2.200v2.500h-2M12.500 17.500l1.500 2M18 15h-2v4.500h2M16 17h2" stroke="#2b1c05" />
      </Icon>
    </Slot>
    <Divider $ml={18} $h={30} $c="#6e4c49" />
    <Slot $ml={4} />
  </TaskBar>
);

export default function App() {
  return (
    <Screen>
      <Global />
      <TitleRow />
      <MenuRow />
      <RibbonRow />
      <Workspace />
      <Status />
      <Taskbar />
    </Screen>
  );
}
